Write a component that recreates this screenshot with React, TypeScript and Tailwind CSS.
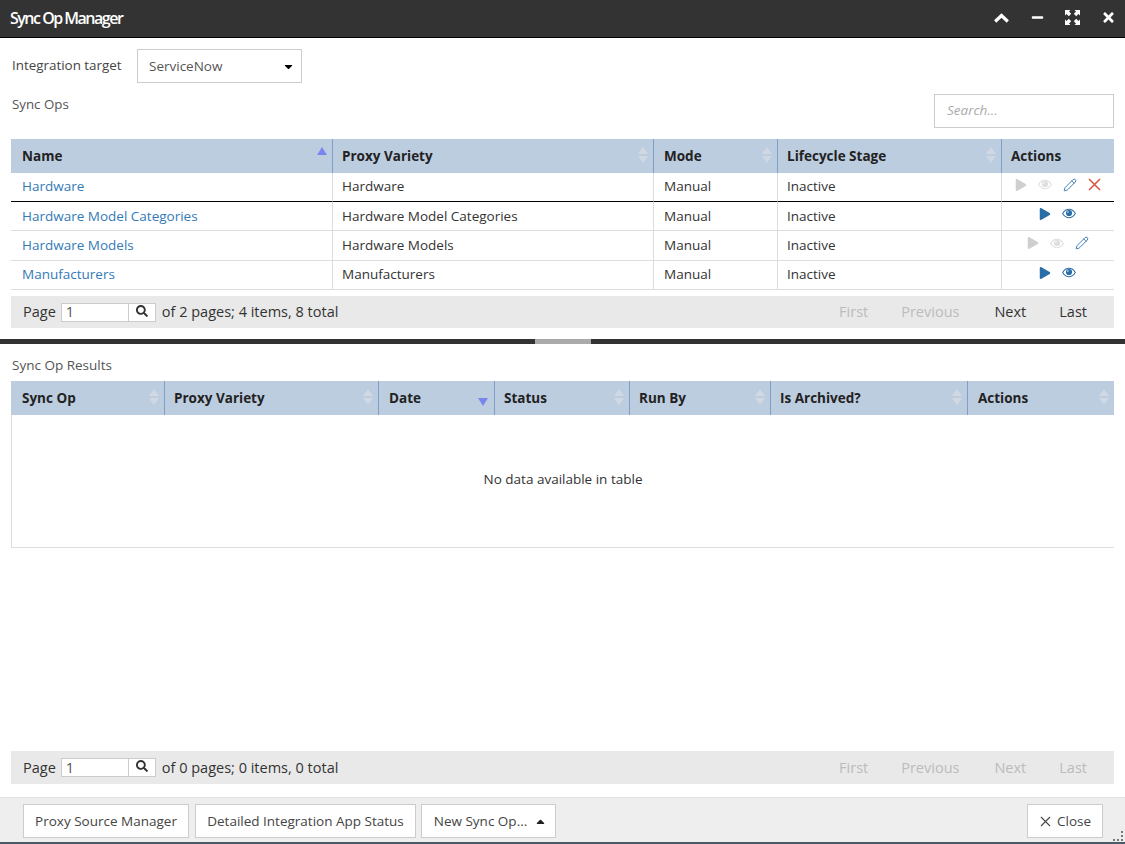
import { FaCaretDown, FaCaretUp, FaMinus, FaPlay, FaSearch, FaTimes } from "react-icons/fa";
import { Pencil, X } from "lucide-react";

type Sort = "none" | "up" | "down" | "off";

function SortMark({ state }: { state: Sort }) {
  if (state === "off") return null;
  if (state === "up") {
    return <span className="absolute right-[5px] top-[8px] h-0 w-0 border-x-[5.5px] border-b-[8px] border-x-transparent border-b-[#7b85ee]" />;
  }
  if (state === "down") {
    return <span className="absolute right-[6px] top-[17px] h-0 w-0 border-x-[5.5px] border-t-[8px] border-x-transparent border-t-[#7b85ee]" />;
  }
  return (
    <span className="absolute right-[5px] top-[8px] flex flex-col gap-[2px]">
      <span className="h-0 w-0 border-x-[5.5px] border-b-[7px] border-x-transparent border-b-[#d0d8e4]" />
      <span className="h-0 w-0 border-x-[5.5px] border-t-[7px] border-x-transparent border-t-[#d0d8e4]" />
    </span>
  );
}

function HeaderCell({ label, width, pl, sort = "none", last }: { label: string; width: string; pl: string; sort?: Sort; last?: boolean }) {
  return (
    <th className={`relative h-[34px] p-0 text-left text-[13.5px] font-bold text-[#222] ${pl} ${width} ${last ? "" : "border-r border-r-[#7f9fca]"}`}>
      {label}
      <SortMark state={sort} />
    </th>
  );
}

function EyeIcon({ className }: { className: string }) {
  return (
    <svg width="14" height="11" viewBox="0 0 15 11" fill="none" className={className}>
      <path d="M0.7 5.5C2.500 2.500 4.800 1 7.500 1s5 1.500 6.800 4.500C12.500 8.500 10.200 10 7.500 10S2.500 8.500 0.7 5.500z" stroke="currentColor" strokeWidth="1.1" />
      <circle cx="7.500" cy="5" r="3.300" fill="currentColor" />
      <circle cx="6.300" cy="3.900" r="0.900" fill="white" opacity="0.8" />
    </svg>
  );
}

function ActionIcons({ variant }: { variant: "edit" | "editDelete" | "run" }) {
  if (variant === "run") {
    return (
      <div className="flex items-center justify-center gap-[11px] pr-[2px] pb-[5px]">
        <FaPlay className="text-[12px] text-[#2a6ea8]" />
        <EyeIcon className="text-[#2a6ea8]" />
      </div>
    );
  }
  return (
    <div className={`flex items-center pb-[5px] ${variant === "editDelete" ? "pl-[13px]" : "pl-[25px]"}`}>
      <FaPlay className="text-[12px] text-[#cfcfcf]" />
      <EyeIcon className="ml-[11px] text-[#dedede]" />
      <Pencil className="ml-[11px] h-[14px] w-[14px] text-[#2a6ea8]" strokeWidth={1.5} />
      {variant === "editDelete" && (
        <svg width="13" height="13" viewBox="0 0 13 13" className="ml-[11px] text-[#d9533a]" stroke="currentColor" strokeWidth="1.5">
          <path d="M1 1l11 11M12 1L1 12" />
        </svg>
      )}
    </div>
  );
}

const rows = [
  { name: "Hardware", h: "h-[29px]", pb: "pb-[2px]", line: "border-b-black", actions: "editDelete" as const },
  { name: "Hardware Model Categories", h: "h-[29px]", pb: "pb-0", line: "border-b-[#ddd]", actions: "run" as const },
  { name: "Hardware Models", h: "h-[30px]", pb: "pb-[1px]", line: "border-b-[#ddd]", actions: "edit" as const },
  { name: "Manufacturers", h: "h-[29px]", pb: "pb-[2px]", line: "border-b-[#ddd]", actions: "run" as const },
];

function Pager({ summary, nextEnabled, h }: { summary: string; nextEnabled?: boolean; h: string }) {
  return (
    <div className={`flex items-center justify-between bg-[#e9e9e9] pl-[12px] pr-[27px] text-[14.5px] text-[#333] ${h}`}>
      <div className="flex items-center">
        <span>Page</span>
        <div className="ml-[5px] flex h-[19px] items-center">
          <span className="flex h-[19px] w-[68px] items-center border border-[#ccc] bg-white pl-[4px] text-[#555]">1</span>
          <span className="flex h-[19px] w-[27px] items-start justify-center border border-l-0 border-[#ccc] bg-white pt-[1px]">
            <FaSearch className="text-[12px] text-[#333]" />
          </span>
        </div>
        <span className="ml-[6px]">{summary}</span>
      </div>
      <div className="flex items-center gap-[33px]">
        <span className="text-[#bbb]">First</span>
        <span className="text-[#bbb]">Previous</span>
        <span className={`ml-[2px] ${nextEnabled ? "text-[#333]" : "text-[#bbb]"}`}>Next</span>
        <span className={nextEnabled ? "text-[#333]" : "text-[#bbb]"}>Last</span>
      </div>
    </div>
  );
}

function FooterButton({ children, w }: { children: React.ReactNode; w: string }) {
  return (
    <button type="button" className={`flex h-[34px] items-center justify-center border border-[#ccc] bg-white pt-[2px] text-[13.5px] text-[#444] ${w}`}>
      {children}
    </button>
  );
}

export default function App() {
  return (
    <div className="flex h-[844px] w-[1125px] flex-col overflow-hidden bg-white font-['Open_Sans',sans-serif] text-[#333]">
      {/* title bar */}
      <div className="flex h-[38px] shrink-0 items-center justify-between border-b border-b-black bg-[#333] pb-[2px] pl-[10px] pr-[9px]">
        <span className="text-[16px] font-semibold tracking-[-1.5px] text-white">Sync Op Manager</span>
        <div className="flex items-center gap-[21px] text-white">
          <svg width="15" height="10" viewBox="0 0 15 10" fill="none" stroke="currentColor" strokeWidth="3.200">
            <path d="M1.200 8.500L7.500 2.500l6.300 6" />
          </svg>
          <FaMinus className="ml-[1px] text-[13px]" />
          <svg width="15" height="15" viewBox="0 0 15 15" fill="currentColor">
            <path d="M0 0h5.500L4 1.600l2.200 2.200-2.400 2.400L1.600 4 0 5.500zM15 0v5.500L13.400 4l-2.200 2.200-2.400-2.400L11 1.600 9.500 0zM0 15V9.500L1.600 11l2.200-2.200 2.400 2.400L4 13.400 5.500 15zM15 15H9.500l1.500-1.600-2.200-2.200 2.400-2.400 2.200 2.200L15 9.500z" />
          </svg>
          <FaTimes className="text-[15px]" />
        </div>
      </div>

      <div className="flex h-[301px] shrink-0 flex-col px-[11px] pt-[11px]">
        <div className="flex items-center">
          <span className="mt-[-2px] w-[111px] pl-px text-[13.4px] whitespace-nowrap text-[#444]">Integration target</span>
          <div className="ml-[15px] flex h-[34px] w-[165px] items-center justify-between border border-[#ccc] pl-[11px] pr-[6px] text-[13.5px] text-[#555]">
            ServiceNow
            <FaCaretDown className="text-[13px] text-black" />
          </div>
        </div>
        <div className="mt-[11px] flex items-start justify-between">
          <span className="mt-[1px] pl-px text-[13.3px] text-[#555]">Sync Ops</span>
          <div className="flex h-[34px] w-[180px] items-center border border-[#ccc] pb-[1px] pl-[12px] text-[13.5px] italic text-[#aaa]">Search...</div>
        </div>
        <table className="mt-[11px] w-[1103px] table-fixed border-separate border-spacing-0">
          <thead>
            <tr className="bg-[#bdcde0]">
              <HeaderCell label="Name" width="w-[322px]" pl="pl-[11px]" sort="up" />
              <HeaderCell label="Proxy Variety" width="w-[321px]" pl="pl-[9px]" />
              <HeaderCell label="Mode" width="w-[124px]" pl="pl-[10px]" />
              <HeaderCell label="Lifecycle Stage" width="w-[224px]" pl="pl-[9px]" />
              <HeaderCell label="Actions" width="w-[112px]" pl="pl-[9px]" sort="off" last />
            </tr>
          </thead>
          <tbody className="text-[13.5px]">
            {rows.map((r) => (
              <tr key={r.name} className={r.h}>
                <td className={`border-b border-r border-r-[#ddd] p-0 pl-[11px] text-[#337ab7] ${r.pb} ${r.line}`}>{r.name}</td>
                <td className={`border-b border-r border-r-[#ddd] p-0 pl-[9px] text-[#333] ${r.pb} ${r.line}`}>{r.name}</td>
                <td className={`border-b border-r border-r-[#ddd] p-0 pl-[10px] text-[#333] ${r.pb} ${r.line}`}>Manual</td>
                <td className={`border-b border-r border-r-[#ddd] p-0 pl-[9px] text-[#333] ${r.pb} ${r.line}`}>Inactive</td>
                <td className={`border-b p-0 ${r.line}`}>
                  <ActionIcons variant={r.actions} />
                </td>
              </tr>
            ))}
          </tbody>
        </table>
        <div className="mt-[6px]">
          <Pager h="h-[32px]" summary="of 2 pages; 4 items, 8 total" nextEnabled />
        </div>
      </div>

      {/* splitter */}
      <div className="flex h-[5px] shrink-0 bg-[#333]">
        <span className="ml-[535px] h-full w-[56px] bg-[#aaa]" />
      </div>

      <div className="flex min-h-0 flex-1 flex-col px-[11px]">
        <span className="mt-[12px] pl-px text-[13.5px] leading-[18px] text-[#555]">Sync Op Results</span>
        <table className="mt-[7px] w-[1103px] table-fixed border-separate border-spacing-0">
          <thead>
            <tr className="bg-[#bdcde0]">
              <HeaderCell label="Sync Op" width="w-[154px]" pl="pl-[11px]" />
              <HeaderCell label="Proxy Variety" width="w-[214px]" pl="pl-[9px]" />
              <HeaderCell label="Date" width="w-[116px]" pl="pl-[10px]" sort="down" />
              <HeaderCell label="Status" width="w-[135px]" pl="pl-[9px]" />
              <HeaderCell label="Run By" width="w-[141px]" pl="pl-[9px]" />
              <HeaderCell label="Is Archived?" width="w-[197px]" pl="pl-[9px]" />
              <HeaderCell label="Actions" width="w-[146px]" pl="pl-[10px]" last />
            </tr>
          </thead>
        </table>
        <div className="flex h-[133px] w-[1103px] items-center justify-center border-b border-l border-[#ddd] pb-[3px] text-[13.5px] text-[#333]">
          No data available in table
        </div>
        <div className="mt-auto mb-[13px]">
          <Pager h="h-[33px]" summary="of 0 pages; 0 items, 0 total" />
        </div>
      </div>

      {/* footer */}
      <div className="relative flex h-[45px] shrink-0 items-center justify-between border-t border-[#e2e2e2] bg-[#eee] pl-[23px] pr-[22px] pt-[1px]">
        <div className="flex items-center gap-[6px]">
          <FooterButton w="w-[166px]">Proxy Source Manager</FooterButton>
          <FooterButton w="w-[221px]">Detailed Integration App Status</FooterButton>
          <div className="ml-[-1px]">
            <FooterButton w="w-[135px] pl-[4px]">
              New Sync Op...
              <FaCaretUp className="ml-[7px] text-[13px] text-[#222]" />
            </FooterButton>
          </div>
        </div>
        <FooterButton w="w-[76px] pr-[2px]">
          <X className="mr-[3px] h-[17px] w-[17px]" strokeWidth={1.5} />
          Close
        </FooterButton>
        <span className="absolute bottom-[1px] right-[2px] h-[10px] w-[10px] border-b-2 border-r-2 border-dotted border-[#777]" />
      </div>
      <div className="h-[2px] shrink-0 bg-[#4a5a66]" />
    </div>
  );
}
